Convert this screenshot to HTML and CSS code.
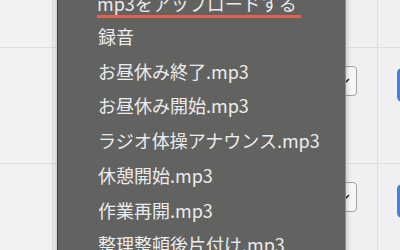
FILE: index.html
```html
<!DOCTYPE html>
<html lang="ja">
<head>
<meta charset="utf-8">
<link rel="stylesheet" href="styles.css">
</head>
<body>
<div class="page">
  <div class="row row-head">
    <div class="cell c1"></div>
    <div class="cell c2"></div>
    <div class="cell c3"></div>
  </div>
  <div class="row row-item">
    <div class="cell c1"></div>
    <div class="cell c2">
      <div class="select">
        <svg class="chev" width="10" height="6" viewBox="0 0 10 6"><path d="M1 1 L5 5 L9 1" fill="none" stroke="#222" stroke-width="1.5"/></svg>
      </div>
    </div>
    <div class="cell c3"><div class="btn"></div></div>
  </div>
  <div class="row row-item">
    <div class="cell c1"></div>
    <div class="cell c2">
      <div class="select">
        <svg class="chev" width="10" height="6" viewBox="0 0 10 6"><path d="M1 1 L5 5 L9 1" fill="none" stroke="#222" stroke-width="1.5"/></svg>
      </div>
    </div>
    <div class="cell c3"><div class="btn"></div></div>
  </div>

  <div class="menu">
    <div class="menu-top"><span class="upload">mp3をアップロードする</span></div>
    <div class="menu-item">録音</div>
    <div class="menu-item">お昼休み終了.mp3</div>
    <div class="menu-item">お昼休み開始.mp3</div>
    <div class="menu-item">ラジオ体操アナウンス.mp3</div>
    <div class="menu-item">休憩開始.mp3</div>
    <div class="menu-item">作業再開.mp3</div>
    <div class="menu-item">整理整頓後片付け.mp3</div>
  </div>
</div>
</body>
</html>
```

FILE: styles.css
```css
html, body {
  margin: 0;
  padding: 0;
}
body {
  width: 400px;
  height: 250px;
  overflow: hidden;
  background: #f0f0f2;
  font-family: "Noto Sans CJK JP", "Noto Sans", sans-serif;
}
.page {
  position: relative;
  width: 400px;
  height: 250px;
  overflow: hidden;
}
.row {
  display: flex;
  border-bottom: 1px solid #dedee0;
}
.row-head {
  height: 47px;
}
.row-item {
  height: 115px;
}
.cell {
  box-sizing: border-box;
  flex-shrink: 0;
}
.c1 {
  width: 53px;
  border-right: 1px solid #dedee0;
  background: #f2f2f4;
}
.c2 {
  width: 325px;
  border-right: 1px solid #dedee0;
  display: flex;
  justify-content: flex-end;
  align-items: flex-start;
  padding: 18px 20px 0 0;
}
.c3 {
  flex: 1 1 auto;
  min-width: 0;
  overflow: hidden;
  padding: 20px 0 0 19px;
}
.select {
  position: relative;
  width: 120px;
  height: 30px;
  box-sizing: border-box;
  border: 1px solid #a4a4a6;
  border-radius: 4px;
  background: #f7f7f8;
}
.chev {
  position: absolute;
  right: 6px;
  top: 11px;
}
.btn {
  width: 60px;
  height: 34px;
  background: #3f82d8;
  border-radius: 5px;
}
.menu {
  position: absolute;
  left: 57px;
  top: -9px;
  width: 289px;
  height: 290px;
  box-sizing: border-box;
  background: #626261;
  border-left: 1px solid #3a3a3a;
  border-right: 1px solid #8e8e8e;
  box-shadow: 0 0 6px rgba(0, 0, 0, 0.25);
  color: #ececec;
  font-size: 18px;
}
.menu-top {
  display: flex;
  padding-left: 39px;
  margin-bottom: 1px;
}
.upload {
  line-height: 24px;
  padding-right: 4px;
  border-bottom: 3px solid #e5604e;
}
.menu-item {
  padding-left: 40px;
  line-height: 34.7px;
  white-space: nowrap;
}
```
